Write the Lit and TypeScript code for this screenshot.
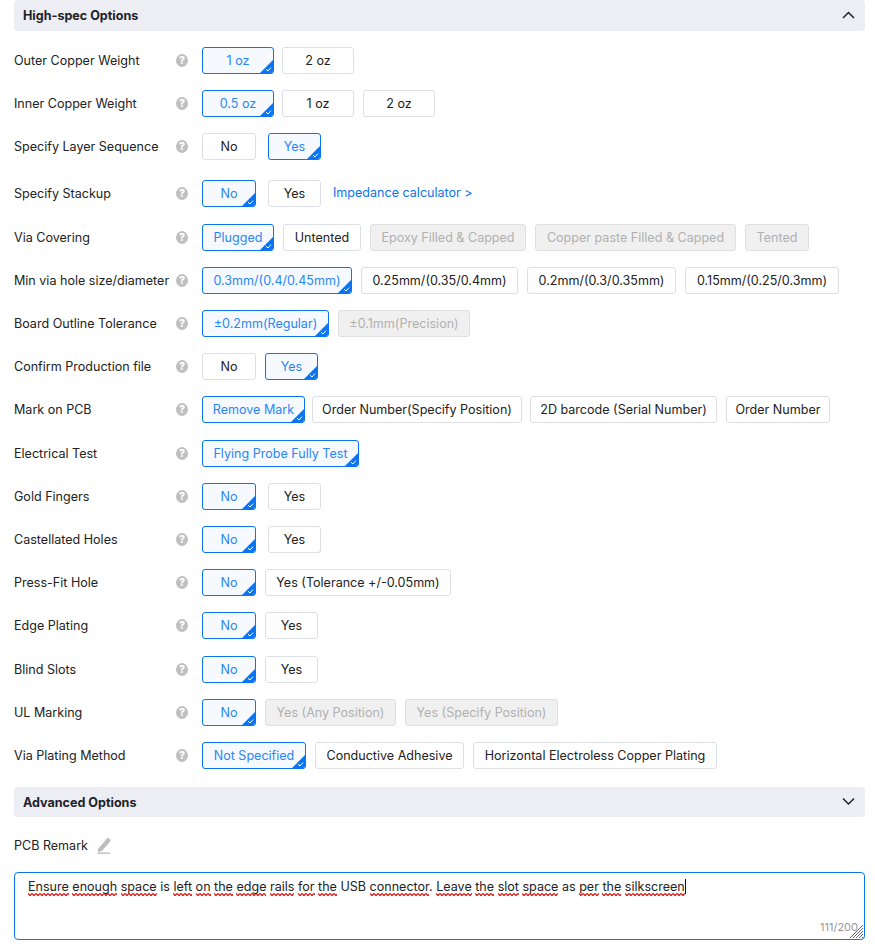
import { LitElement, html, css, svg } from "lit";
import { customElement } from "lit/decorators.js";

type Opt = { t: string; w: number; g?: number; on?: boolean; off?: boolean };
type Row = { label: string; h: number; opts: Opt[]; link?: string };

const rows: Row[] = [
  { label: "Outer Copper Weight", h: 43, opts: [{ t: "1 oz", w: 72, on: true }, { t: "2 oz", w: 72 }] },
  { label: "Inner Copper Weight", h: 43, opts: [{ t: "0.5 oz", w: 72, on: true }, { t: "1 oz", w: 72 }, { t: "2 oz", w: 72, g: 9 }] },
  { label: "Specify Layer Sequence", h: 47, opts: [{ t: "No", w: 54 }, { t: "Yes", w: 53, g: 12, on: true }] },
  { label: "Specify Stackup", h: 44, opts: [{ t: "No", w: 54, on: true }, { t: "Yes", w: 53, g: 12 }], link: "Impedance calculator >" },
  { label: "Via Covering", h: 43, opts: [{ t: "Plugged", w: 72, on: true }, { t: "Untented", w: 78, g: 9 }, { t: "Epoxy Filled & Capped", w: 156, g: 9, off: true }, { t: "Copper paste Filled & Capped", w: 201, g: 9, off: true }, { t: "Tented", w: 64, g: 9, off: true }] },
  { label: "Min via hole size/diameter", h: 43, opts: [{ t: "0.3mm/(0.4/0.45mm)", w: 150, on: true }, { t: "0.25mm/(0.35/0.4mm)", w: 157, g: 9 }, { t: "0.2mm/(0.3/0.35mm)", w: 149, g: 9 }, { t: "0.15mm/(0.25/0.3mm)", w: 154, g: 9 }] },
  { label: "Board Outline Tolerance", h: 43, opts: [{ t: "±0.2mm(Regular)", w: 127, on: true }, { t: "±0.1mm(Precision)", w: 132, g: 9, off: true }] },
  { label: "Confirm Production file", h: 43, opts: [{ t: "No", w: 54 }, { t: "Yes", w: 53, g: 9, on: true }] },
  { label: "Mark on PCB", h: 44, opts: [{ t: "Remove Mark", w: 103, on: true }, { t: "Order Number(Specify Position)", w: 210, g: 7 }, { t: "2D barcode (Serial Number)", w: 187, g: 8 }, { t: "Order Number", w: 104, g: 9 }] },
  { label: "Electrical Test", h: 43, opts: [{ t: "Flying Probe Fully Test", w: 157, on: true }] },
  { label: "Gold Fingers", h: 43, opts: [{ t: "No", w: 54, on: true }, { t: "Yes", w: 53, g: 12 }] },
  { label: "Castellated Holes", h: 43, opts: [{ t: "No", w: 54, on: true }, { t: "Yes", w: 53, g: 12 }] },
  { label: "Press-Fit Hole", h: 43, opts: [{ t: "No", w: 54, on: true }, { t: "Yes (Tolerance +/-0.05mm)", w: 186, g: 9 }] },
  { label: "Edge Plating", h: 44, opts: [{ t: "No", w: 54, on: true }, { t: "Yes", w: 53, g: 9 }] },
  { label: "Blind Slots", h: 43, opts: [{ t: "No", w: 54, on: true }, { t: "Yes", w: 53, g: 9 }] },
  { label: "UL Marking", h: 43, opts: [{ t: "No", w: 54, on: true }, { t: "Yes (Any Position)", w: 131, g: 9, off: true }, { t: "Yes (Specify Position)", w: 153, g: 9, off: true }] },
  { label: "Via Plating Method", h: 45, opts: [{ t: "Not Specified", w: 104, on: true }, { t: "Conductive Adhesive", w: 149, g: 9 }, { t: "Horizontal Electroless Copper Plating", w: 244, g: 9 }] },
];

const chevUp = svg`<path d="M1 7 L6.5 1.5 L12 7" fill="none" stroke="#1b2230" stroke-width="1.5"/>`;
const chevDown = svg`<path d="M1 1.5 L6.5 7 L12 1.5" fill="none" stroke="#1b2230" stroke-width="1.5"/>`;

const remark = "Ensure enough space is left on the edge rails for the USB connector. Leave the slot space as per the silkscreen";
const clean = new Set(["is", "USB", "as"]);

@customElement("app-root")
export class AppRoot extends LitElement {
  static styles = css`
    :host { display: block; width: 875px; height: 952px; overflow: hidden; background: #fff; font-family: Inter, "Liberation Sans", sans-serif; font-size: 12.55px; color: #222; }
    .wrap { padding: 0 10px 0 14px; }
    .head { height: 31px; background: #edeef3; border-radius: 4px; display: flex; align-items: center; justify-content: space-between; padding: 0 10px 0 9px; font-weight: 700; font-size: 12.55px; color: #1d2129; }
    .head svg { width: 13px; height: 9px; display: block; margin-top: -1px; }
    .rows { padding-top: 16px; }
    .row { display: flex; align-items: flex-start; }
    .label { width: 162px; height: 27px; line-height: 27px; white-space: nowrap; }
    .help { width: 12px; height: 13px; margin-top: 7px; border-radius: 50%; background: #bfbfbf; color: #fff; font-size: 10.5px; font-weight: 800; line-height: 13px; text-align: center; margin-right: 14px; flex: none; }
    .opt { height: 27px; box-sizing: border-box; border: 1px solid #dcdfe6; border-radius: 3px; background: #fff; display: flex; align-items: center; justify-content: center; white-space: nowrap; color: #222; position: relative; overflow: hidden; flex: none; }
    .opt.on { border-color: #0b74f1; background: #f6faff; color: #2a86f5; }
    .opt.off { background: #f0f0f0; border-color: #dfdfdf; color: #b0b0b0; }
    .corner { position: absolute; right: 0; bottom: 0; width: 13px; height: 13px; }
    .link { color: #0b74f1; margin-left: 12px; height: 27px; line-height: 26px; }
    .opts { margin-left: -8px; }
    .head2 { height: 30px; }
    .remark { display: flex; align-items: center; height: 20px; margin-top: 18.5px; color: #222; }
    .remark svg { width: 14px; height: 17px; margin-left: 9px; margin-top: -1px; }
    .box { position: relative; box-sizing: border-box; margin-top: 16.5px; height: 68px; border: 1px solid #0b74f1; border-radius: 4px; padding: 5px 13px; line-height: 18px; color: #222; white-space: nowrap; }
    .sp { padding-bottom: 2px; background: url("data:image/svg+xml,%3Csvg xmlns='http://www.w3.org/2000/svg' width='4' height='3'%3E%3Cpath d='M0 0.4 L2 2.6 L4 0.4' fill='none' stroke='%23e0100c' stroke-width='1.3'/%3E%3C/svg%3E") repeat-x left bottom; }
    .caret { display: inline-block; width: 1px; height: 15px; background: #111; vertical-align: -3px; }
    .count { position: absolute; right: 6px; bottom: 5px; font-size: 11px; line-height: 14px; color: #999; }
    .grip { position: absolute; right: 0; bottom: 0; width: 15px; height: 15px; }
  `;

  private opt(o: Opt) {
    const cls = "opt" + (o.on ? " on" : "") + (o.off ? " off" : "");
    return html`<div class=${cls} style="width:${o.w}px;margin-left:${o.g ?? 8}px">
      ${o.t}
      ${o.on
        ? html`<svg class="corner" viewBox="0 0 13 13"><path d="M13 0 V13 H0 Z" fill="#0b74f1"/><path d="M6 9.2 L8 11 L11 7.6" fill="none" stroke="#fff" stroke-width="1"/></svg>`
        : ""}
    </div>`;
  }

  render() {
    const words = remark.split(" ");
    return html`<div class="wrap">
      <div class="head">High-spec Options <svg viewBox="0 0 13 9">${chevUp}</svg></div>
      <div class="rows">
        ${rows.map(
          (r) => html`<div class="row" style="height:${r.h}px">
            <div class="label">${r.label}</div>
            <div class="help">?</div>
            <div class="row opts">${r.opts.map((o) => this.opt(o))}</div>
            ${r.link ? html`<div class="link">${r.link}</div>` : ""}
          </div>`
        )}
      </div>
      <div class="head head2">Advanced Options <svg viewBox="0 0 13 9">${chevDown}</svg></div>
      <div class="remark">PCB Remark
        <svg viewBox="0 0 14 17"><path d="M1 12 L9.5 2 Q10.5 0.6 12 1.2 L13.2 2.4 Q13.8 3.8 12.8 5 L4.8 14 L1 15 Z" fill="#bdbdbd"/><path d="M0.5 16.2 H13" stroke="#bdbdbd" stroke-width="1.4"/></svg>
      </div>
      <div class="box">${words.map((w, i) => {
        const m = w.match(/^(.*?)(\.?)$/)!;
        return html`${clean.has(w) ? w : html`<span class="sp">${m[1]}</span>${m[2]}`}${i < words.length - 1 ? " " : ""}`;
      })}<span class="caret"></span>
        <div class="count">111/200</div>
        <svg class="grip" viewBox="0 0 15 15"><path d="M14 1 L1 14 M14 4 L4 14 M14 7 L7 14 M14 10 L10 14 M14 13 L13 14" stroke="#666" stroke-width="1" fill="none"/></svg>
      </div>
    </div>`;
  }
}
